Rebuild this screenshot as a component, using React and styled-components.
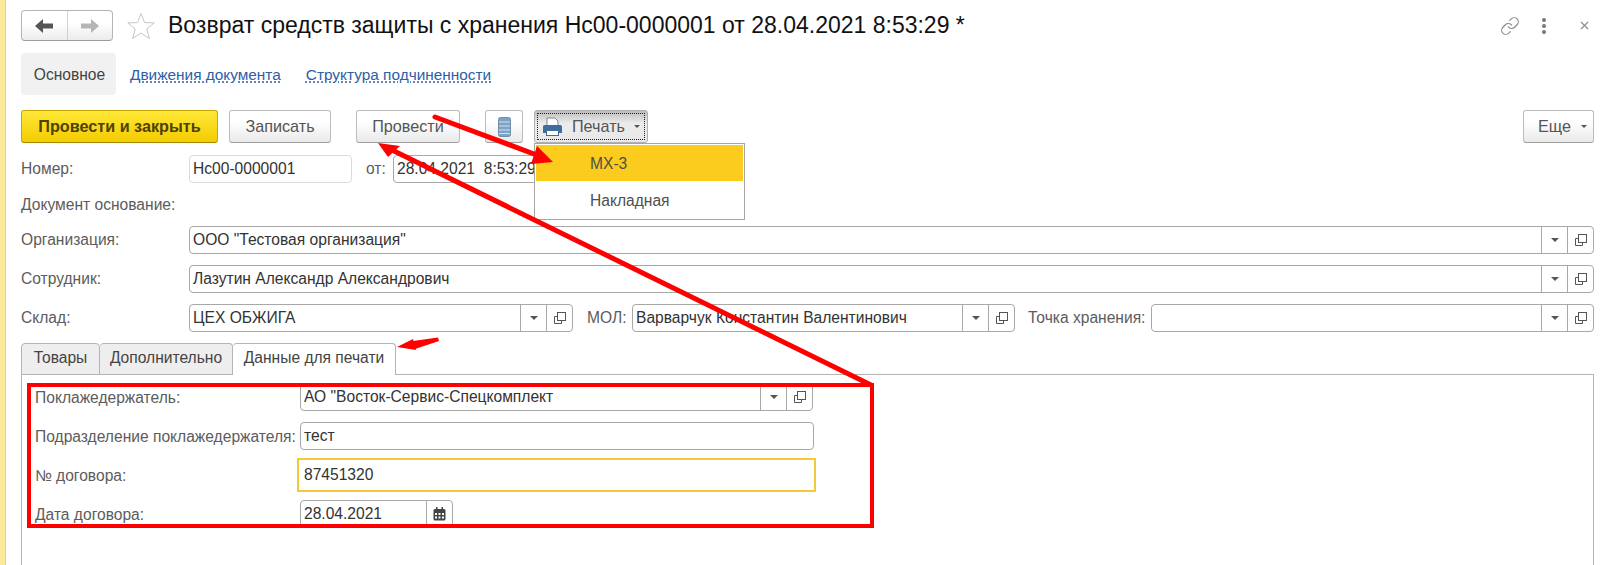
import React from 'react';
import styled, { createGlobalStyle } from 'styled-components';
import { Link as LinkIcon, X } from 'lucide-react';

const Global = createGlobalStyle`
  html, body { margin: 0; padding: 0; background: #fff; }
  body { font-family: "Liberation Sans", Arial, sans-serif; font-size: 15.6px; color: #444; overflow: hidden; }
  * { box-sizing: border-box; }
`;

const Page = styled.div`
  position: relative;
  display: flex;
  width: 1606px;
  height: 565px;
  overflow: hidden;
  background: #fff;
`;
const Strip = styled.div`
  flex: 0 0 6px;
  background: #fbe99c;
  border-right: 1px solid #e2d28a;
`;
const Main = styled.main`
  flex: 1;
  display: flex;
  flex-direction: column;
  padding: 10px 12px 0 15px;
  min-width: 0;
`;
const TitleBar = styled.header`
  display: flex;
  align-items: center;
  height: 31px;
`;
const NavGroup = styled.div`
  display: flex;
  width: 92px;
  height: 31px;
  border: 1px solid #b4b4b4;
  border-bottom-color: #9d9d9d;
  border-radius: 4px;
  background: linear-gradient(#fff 40%, #ececec);
  margin-right: 14px;
`;
const NavButton = styled.button`
  flex: 1;
  display: flex;
  align-items: center;
  justify-content: center;
  padding: 0;
  border: 0;
  background: none;
  & + & { border-left: 1px solid #d2d2d2; }
`;
const StarWrap = styled.span`
  display: flex;
  width: 28px;
  margin-right: 13px;
`;
const Title = styled.h1`
  margin: 0;
  font-size: 23px;
  font-weight: 400;
  color: #111;
  white-space: nowrap;
`;
const HeaderActions = styled.div`
  margin-left: auto;
  display: flex;
  align-items: center;
  margin-right: 5px;
  color: #8a8a8a;
`;
const Dots = styled.span`
  display: flex;
  flex-direction: column;
  gap: 2px;
  margin: 0 34px 0 22px;
  & > i { display: block; width: 4px; height: 4px; border-radius: 50%; background: #777; }
`;
const SectionNav = styled.nav`
  display: flex;
  align-items: center;
  height: 42px;
  margin-top: 12px;
`;
const SectionActive = styled.span`
  display: flex;
  align-items: center;
  justify-content: center;
  width: 95px;
  height: 42px;
  padding: 2px 0 0 2px;
  background: #f1f1f1;
  border-radius: 4px;
  color: #444;
  margin-right: 14px;
`;
const SectionLink = styled.a`
  padding-top: 2px;
  font-size: 15.4px;
  color: #2e5ea6;
  text-decoration: underline dotted;
  text-underline-offset: 2px;
  margin-right: ${p => p.$gap || 0}px;
  white-space: nowrap;
`;
const Toolbar = styled.div`
  display: flex;
  align-items: stretch;
  height: 33px;
  margin-top: 15px;
  font-size: 16.2px;
`;
const Btn = styled.button`
  display: flex;
  align-items: center;
  justify-content: center;
  width: ${p => p.$w}px;
  margin-right: ${p => p.$mr || 0}px;
  margin-left: ${p => (p.$auto ? 'auto' : '0')};
  padding: 0 0 0 ${p => p.$pl || 0}px;
  border: 1px solid #bcbcbc;
  border-bottom-color: #9f9f9f;
  border-radius: 3px;
  background: linear-gradient(#fff 35%, #e9e9e9);
  font: inherit;
  color: #555;
`;
const PrimaryBtn = styled(Btn)`
  border-color: #c8a800;
  border-bottom-color: #a58a00;
  background: linear-gradient(#ffe838, #f4cb00);
  font-weight: 700;
  color: #4d4200;
`;
const PressedBtn = styled(Btn)`
  padding: 2px;
  background: linear-gradient(#bdbdbd, #ececec 40%, #e8e8e8);
  border-color: #b0b0b0;
`;
const PressedInner = styled.span`
  flex: 1;
  align-self: stretch;
  display: flex;
  align-items: center;
  justify-content: center;
  gap: 9px;
  border: 1px dotted #222;
`;
const Caret = styled.i`
  display: inline-block;
  margin-left: ${p => p.$ml || 0}px;
  border-left: ${p => p.$s || 3}px solid transparent;
  border-right: ${p => p.$s || 3}px solid transparent;
  border-top: ${p => p.$s || 3}px solid #555;
`;
const Row = styled.div`
  display: flex;
  align-items: center;
  height: ${p => p.$h || 28}px;
  margin-top: ${p => p.$mt || 11}px;
`;
const Label = styled.span`
  flex: 0 0 ${p => p.$w}px;
  margin-left: ${p => p.$ml || 0}px;
  color: #5c5c5c;
  white-space: nowrap;
`;
const Field = styled.div`
  display: flex;
  align-items: stretch;
  flex: ${p => (p.$w ? `0 0 ${p.$w}px` : '1')};
  height: 28px;
  border: 1px solid ${p => (p.$readonly ? '#dcdcdc' : '#a8a8a8')};
  border-radius: 4px;
  background: #fff;
  min-width: 0;
`;
const Value = styled.span`
  flex: 1;
  display: flex;
  align-items: center;
  padding: 0 3px;
  color: #333;
  white-space: pre;
  overflow: hidden;
`;
const FieldBtn = styled.span`
  flex: 0 0 26px;
  display: flex;
  align-items: center;
  justify-content: center;
  border-left: 1px solid #a8a8a8;
`;
const FocusField = styled.div`
  display: flex;
  align-items: center;
  width: 519px;
  height: 34px;
  margin-left: -3px;
  padding: 0 5px;
  border: 2px solid #f1c93b;
  color: #333;
`;
const TabStrip = styled.div`
  display: flex;
  height: 32px;
  margin-top: 11px;
`;
const Tab = styled.span`
  display: flex;
  align-items: center;
  justify-content: center;
  width: ${p => p.$w}px;
  padding-bottom: 3px;
  border: 1px solid #b4b4b4;
  border-left-width: ${p => (p.$first ? 1 : 0)}px;
  border-bottom: ${p => (p.$active ? 0 : 1)}px solid #b4b4b4;
  border-radius: 4px 4px 0 0;
  background: ${p => (p.$active ? '#fff' : '#eeeeee')};
  color: #444;
  position: relative;
  z-index: 1;
`;
const Pane = styled.section`
  flex: 1;
  margin-top: -1px;
  padding: 8px 13px 0;
  border: 1px solid #b4b4b4;
  border-bottom: 0;
`;
const PaneRow = styled(Row)`
  margin-top: ${p => p.$mt ?? 8}px;
  & > span:first-child { padding-top: 1px; }
`;
const Dropdown = styled.div`
  position: absolute;
  left: 534px;
  top: 143px;
  width: 211px;
  height: 77px;
  padding: 1px;
  background: #fff;
  border: 1px solid #a6a6a6;
  z-index: 3;
`;
const MenuItem = styled.div`
  display: flex;
  align-items: center;
  height: 36px;
  padding: 2px 0 0 54px;
  margin-bottom: ${p => (p.$active ? 1 : 0)}px;
  background: ${p => (p.$active ? '#fbcb1e' : '#fff')};
  color: #4f4f4f;
`;
const RedFrame = styled.div`
  position: absolute;
  left: 27px;
  top: 383px;
  width: 847px;
  height: 145px;
  border: 4px solid #f00;
  z-index: 4;
  pointer-events: none;
`;
const Arrows = styled.svg`
  position: absolute;
  left: 0;
  top: 0;
  z-index: 5;
  pointer-events: none;
`;

const Copy = () => (
  <svg width="14" height="14" viewBox="0 0 14 14" fill="none" stroke="#555" strokeWidth="1">
    <rect x="4.500" y="1.500" width="8" height="8" />
    <path d="M4.500 5.500H1.500v7h7V9.500" />
  </svg>
);
const Select = () => (
  <>
    <FieldBtn><Caret $s={4} /></FieldBtn>
    <FieldBtn><Copy /></FieldBtn>
  </>
);

const ArrowLeft = ({ color }) => (
  <svg width="18" height="14" viewBox="0 0 18 14"><path d="M0 7 8 0v4.500h10v5H8V14z" fill={color} /></svg>
);
const ArrowRight = ({ color }) => (
  <svg width="18" height="14" viewBox="0 0 18 14"><path d="M18 7 10 0v4.500H0v5h10V14z" fill={color} /></svg>
);
const Star = () => (
  <svg width="28" height="28" viewBox="0 0 28 28" fill="none" stroke="#c6c6c6" strokeWidth="1">
    <path d="M14 1.500 17.600 10.600 27.200 10.900 19.800 17 22.400 26.500 14 21 5.600 26.500 8.200 17 0.800 10.900 10.400 10.600z" />
  </svg>
);
const Printer = () => (
  <svg width="21" height="20" viewBox="0 0 21 20">
    <path d="M5 1h8l3 3v5H5z" fill="#fff" stroke="#7a8794" strokeWidth="1" />
    <path d="M1 9.500A1.500 1.500 0 0 1 2.500 8h16A1.500 1.500 0 0 1 20 9.500V16h-3v-3H4v3H1z" fill="#3f6e9e" />
    <rect x="4.500" y="13.500" width="12" height="5" fill="#fff" stroke="#3f6e9e" />
  </svg>
);
const Database = () => (
  <svg width="13" height="20" viewBox="0 0 13 20">
    <rect x="0.500" y="0.500" width="12" height="19" rx="2" fill="#7ba3c4" stroke="#6d8ea8" />
    <path d="M1 5h11M1 9h11M1 13h11M1 16.500h11" stroke="#d5e3ee" strokeWidth="1" />
  </svg>
);
const Calendar = () => (
  <svg width="13" height="14" viewBox="0 0 13 14">
    <rect x="0.500" y="2" width="12" height="11.500" rx="1.500" fill="#444" />
    <rect x="3" y="0" width="1.500" height="3" fill="#444" />
    <rect x="8.500" y="0" width="1.500" height="3" fill="#444" />
    <path d="M2 6h2v2H2zM5.500 6h2v2h-2zM9 6h2v2H9zM2 9.500h2v2H2zM5.500 9.500h2v2h-2zM9 9.500h2v2H9z" fill="#fff" />
  </svg>
);

export default function App() {
  return (
    <Page>
      <Global />
      <Strip />
      <Main>
        <TitleBar>
          <NavGroup>
            <NavButton><ArrowLeft color="#555" /></NavButton>
            <NavButton><ArrowRight color="#b5b5b5" /></NavButton>
          </NavGroup>
          <StarWrap><Star /></StarWrap>
          <Title>Возврат средств защиты с хранения Нс00-0000001 от 28.04.2021 8:53:29 *</Title>
          <HeaderActions>
            <LinkIcon size={20} strokeWidth={1.4} />
            <Dots><i /><i /><i /></Dots>
            <X size={13} strokeWidth={2} style={{ margin: '0 -2px' }} />
          </HeaderActions>
        </TitleBar>

        <SectionNav>
          <SectionActive>Основное</SectionActive>
          <SectionLink $gap={25}>Движения документа</SectionLink>
          <SectionLink>Структура подчиненности</SectionLink>
        </SectionNav>

        <Toolbar>
          <PrimaryBtn $w={197} $mr={11}>Провести и закрыть</PrimaryBtn>
          <Btn $w={102} $mr={25}>Записать</Btn>
          <Btn $w={104} $mr={25}>Провести</Btn>
          <Btn $w={38} $mr={11}><Database /></Btn>
          <PressedBtn $w={114}>
            <PressedInner>
              <Printer />
              <span>Печать</span>
              <Caret />
            </PressedInner>
          </PressedBtn>
          <Btn $w={71} $auto $pl={8}>Еще<Caret $ml={10} /></Btn>
        </Toolbar>

        <Row $mt={12}>
          <Label $w={168}>Номер:</Label>
          <Field $w={163} $readonly><Value>Нс00-0000001</Value></Field>
          <Label $w={27} $ml={14}>от:</Label>
          <Field $w={150}><Value>28.04.2021  8:53:29</Value></Field>
        </Row>
        <Row $h={21}><Label $w={168}>Документ основание:</Label></Row>
        <Row>
          <Label $w={168}>Организация:</Label>
          <Field><Value>ООО "Тестовая организация"</Value><Select /></Field>
        </Row>
        <Row>
          <Label $w={168}>Сотрудник:</Label>
          <Field><Value>Лазутин Александр Александрович</Value><Select /></Field>
        </Row>
        <Row>
          <Label $w={168}>Склад:</Label>
          <Field $w={384}><Value>ЦЕХ ОБЖИГА</Value><Select /></Field>
          <Label $w={45} $ml={14}>МОЛ:</Label>
          <Field $w={383}><Value>Варварчук Константин Валентинович</Value><Select /></Field>
          <Label $w={123} $ml={13}>Точка хранения:</Label>
          <Field><Value /><Select /></Field>
        </Row>

        <TabStrip>
          <Tab $w={79} $first>Товары</Tab>
          <Tab $w={133}>Дополнительно</Tab>
          <Tab $w={163} $active>Данные для печати</Tab>
        </TabStrip>
        <Pane>
          <PaneRow $mt={0}>
            <Label $w={265}>Поклажедержатель:</Label>
            <Field $w={513}><Value>АО "Восток-Сервис-Спецкомплект</Value><Select /></Field>
          </PaneRow>
          <PaneRow $mt={11}>
            <Label $w={265}>Подразделение поклажедержателя:</Label>
            <Field $w={514}><Value>тест</Value></Field>
          </PaneRow>
          <PaneRow $h={34}>
            <Label $w={265}>№ договора:</Label>
            <FocusField>87451320</FocusField>
          </PaneRow>
          <PaneRow>
            <Label $w={265}>Дата договора:</Label>
            <Field $w={153}><Value>28.04.2021</Value><FieldBtn><Calendar /></FieldBtn></Field>
          </PaneRow>
        </Pane>
      </Main>

      <Dropdown>
        <MenuItem $active>МХ-3</MenuItem>
        <MenuItem>Накладная</MenuItem>
      </Dropdown>
      <RedFrame />
      <Arrows width="1606" height="565" viewBox="0 0 1606 565">
        <path d="M435 117 542 157" stroke="#f00" strokeWidth="5" strokeLinecap="round" />
        <path d="M537 146 553 162 531 164z" fill="#f00" />
        <path d="M871 385 392 150" stroke="#f00" strokeWidth="5" />
        <path d="M378 143 400 146 388 157z" fill="#f00" />
        <path d="M438 337.500 439 341 415 349 413 341z" fill="#f00" />
        <path d="M397 347 413 339 416 350z" fill="#f00" />
      </Arrows>
    </Page>
  );
}
